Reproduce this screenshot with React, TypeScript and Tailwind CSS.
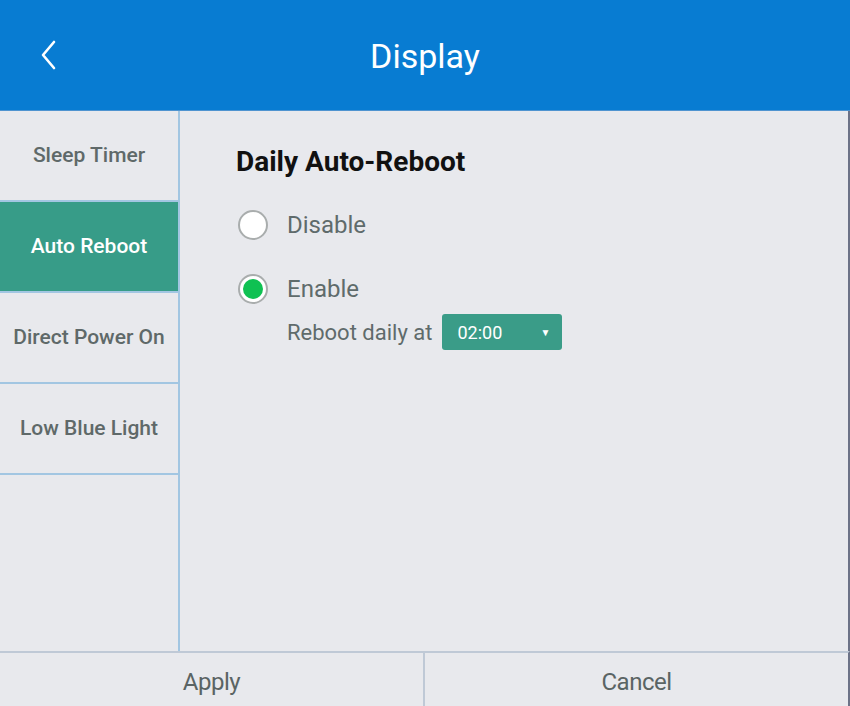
import { useState } from "react";

const menu = ["Sleep Timer", "Auto Reboot", "Direct Power On", "Low Blue Light"];

function Radio({ checked }: { checked: boolean }) {
  return (
    <span className="flex h-[30px] w-[30px] items-center justify-center rounded-full border-2 border-[#a9adad] bg-white">
      {checked ? <span className="h-[20px] w-[20px] rounded-full bg-[#0fc152]" /> : null}
    </span>
  );
}

export default function App() {
  const [active] = useState("Auto Reboot");
  const [enabled, setEnabled] = useState(true);

  return (
    <div className="flex h-[706px] w-[850px] flex-col bg-[#e8e9ed] font-['Roboto',sans-serif]">
      <header className="relative flex h-[111px] shrink-0 items-center justify-center bg-[#087cd2] border-b border-[#4f94d0]">
        <button type="button" className="absolute left-[38px] top-[38px] text-white" aria-label="Back">
          <svg width="22" height="34" viewBox="0 0 22 34" fill="none">
            <path d="M16 4 L5 17 L16 30" stroke="white" strokeWidth="2.6" strokeLinecap="round" strokeLinejoin="round" />
          </svg>
        </button>
        <h1 className="pt-[2px] text-[34px] leading-none text-white">Display</h1>
      </header>

      <div className="flex flex-1 border-r-2 border-[#6c7287]">
        <nav className="flex w-[180px] shrink-0 flex-col border-r-2 border-[#a2c6e2]">
          {menu.map((item) => (
            <div
              key={item}
              className={`flex h-[91px] items-center justify-center border-b-2 border-[#a2c6e2] text-[21px] font-medium ${
                item === active ? "bg-[#379c88] text-white" : "text-[#5f6969]"
              }`}
            >
              {item}
            </div>
          ))}
        </nav>

        <section className="flex-1 pl-[56px] pt-[37px]">
          <h2 className="text-[28px] font-bold leading-none text-[#111]">Daily Auto-Reboot</h2>
          <button
            type="button"
            className="mt-[31px] flex items-center gap-[19px]"
            onClick={() => setEnabled(false)}
          >
            <span className="ml-[2px]"><Radio checked={!enabled} /></span>
            <span className="text-[24px] text-[#5f6b6b]">Disable</span>
          </button>
          <button
            type="button"
            className="mt-[28px] flex items-center gap-[19px]"
            onClick={() => setEnabled(true)}
          >
            <span className="ml-[2px]"><Radio checked={enabled} /></span>
            <span className="text-[24px] text-[#5f6b6b]">Enable</span>
          </button>
          <div className="mt-[7px] flex items-center gap-[10px] pl-[51px]">
            <span className="text-[22px] text-[#5f6b6b]">Reboot daily at</span>
            <div className="flex h-[36px] w-[120px] items-center justify-between rounded-[3px] bg-[#3a9c88] pl-[15px] pr-[12px] text-[18px] text-white">
              <span>02:00</span>
              <span className="text-[10px]">▼</span>
            </div>
          </div>
        </section>
      </div>

      <footer className="flex h-[55px] shrink-0 border-t-2 border-[#bfc9d6] border-r-2 border-r-[#6c7287]">
        <button type="button" className="flex-1 border-r-2 border-[#bfc9d6] pt-[4px] text-[24px] tracking-[-0.5px] text-[#5a6464]">
          Apply
        </button>
        <button type="button" className="flex-1 pt-[4px] text-[24px] tracking-[-0.5px] text-[#5a6464]">
          Cancel
        </button>
      </footer>
    </div>
  );
}
